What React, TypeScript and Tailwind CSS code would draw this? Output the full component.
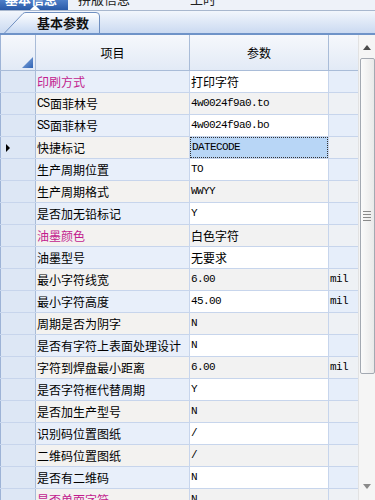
import React from "react";

type Row = { label: string; value: string; unit?: string; pink?: boolean; cjk?: boolean; selected?: boolean };

const rows: Row[] = [
  { label: "印刷方式", value: "打印字符", pink: true, cjk: true },
  { label: "CS面菲林号", value: "4w0024f9a0.to" },
  { label: "SS面菲林号", value: "4w0024f9a0.bo" },
  { label: "快捷标记", value: "DATECODE", selected: true },
  { label: "生产周期位置", value: "TO" },
  { label: "生产周期格式", value: "WWYY" },
  { label: "是否加无铅标记", value: "Y" },
  { label: "油墨颜色", value: "白色字符", pink: true, cjk: true },
  { label: "油墨型号", value: "无要求", cjk: true },
  { label: "最小字符线宽", value: "6.00", unit: "mil" },
  { label: "最小字符高度", value: "45.00", unit: "mil" },
  { label: "周期是否为阴字", value: "N" },
  { label: "是否有字符上表面处理设计", value: "N" },
  { label: "字符到焊盘最小距离", value: "6.00", unit: "mil" },
  { label: "是否字符框代替周期", value: "Y" },
  { label: "是否加生产型号", value: "N" },
  { label: "识别码位置图纸", value: "/" },
  { label: "二维码位置图纸", value: "/" },
  { label: "是否有二维码", value: "N" },
  { label: "是否单面字符", value: "N", pink: true },
];

function Label({ text }: { text: string }) {
  const m = text.match(/^([A-Z]+)(.*)$/);
  if (m) {
    return (
      <>
        <span className="font-['Liberation_Mono',monospace] text-[12px] tracking-[-1.2px] mr-[1px]">{m[1]}</span>
        {m[2]}
      </>
    );
  }
  return <>{text}</>;
}

export default function App() {
  return (
    <div className="w-[375px] h-[500px] overflow-hidden bg-white font-['Noto_Sans_CJK_SC',sans-serif] text-[12px] text-black leading-none">
      {/* top cut-off tab strip */}
      <div className="h-[11px] overflow-hidden flex bg-[#eef2f9] border-b border-[#a8b7ce]">
        <div className="relative w-[68px] h-[10px] bg-gradient-to-b from-[#4f7fc8] to-[#2a5aa8]">
          <div className="-mt-[9px] pl-[5px] text-[13px] font-bold text-white leading-[16px]">基本信息</div>
          <div className="absolute bottom-0 left-[30px] w-0 h-0 border-l-[5px] border-r-[5px] border-b-[5px] border-l-transparent border-r-transparent border-b-white" />
        </div>
        <div className="-mt-[9px] ml-[10px] text-[13px] text-[#222] leading-[16px]">拼版信息</div>
        <div className="-mt-[9px] ml-[60px] text-[13px] text-[#222] leading-[16px]">工时</div>
      </div>

      {/* sub tab area */}
      <div className="h-[22px] bg-gradient-to-b from-[#f2f6fc] to-[#cbdaf1] flex items-end">
        <div className="relative w-[100px] h-[21px]">
          <svg className="absolute inset-0" width="100" height="21" viewBox="0 0 100 21">
            <defs>
              <linearGradient id="tg" x1="0" y1="0" x2="0" y2="1">
                <stop offset="0" stopColor="#ffffff" />
                <stop offset="1" stopColor="#c6d8f2" />
              </linearGradient>
            </defs>
            <path d="M4.5 21 L23 1.5 Q24 0.5 26 0.5 L96 0.5 Q99.5 0.5 99.5 4 L99.5 21" fill="url(#tg)" stroke="#6f8fc0" strokeWidth="1" />
          </svg>
          <div className="relative pl-[37px] pt-[4px] text-[13px] font-bold text-[#111] leading-[14px]">基本参数</div>
        </div>
      </div>
      <div className="h-[2px] bg-[#6f93c8]" />

      {/* grid */}
      <div className="flex">
        <div className="w-[358px] flex flex-col">
          {/* header */}
          <div className="flex h-[36px] border-b border-[#a9bcd8] bg-gradient-to-b from-[#f6f8fc] to-[#e2eaf6]">
            <div className="relative w-[36px] border-r border-[#a9bcd8] border-l border-l-[#9db3d6]">
              <svg className="absolute right-[2px] bottom-[2px]" width="11" height="11" viewBox="0 0 11 11">
                <defs>
                  <linearGradient id="hg" x1="0" y1="0" x2="1" y2="1">
                    <stop offset="0" stopColor="#8fb0e0" />
                    <stop offset="1" stopColor="#2f63b5" />
                  </linearGradient>
                </defs>
                <path d="M11 0 L11 11 L0 11 Z" fill="url(#hg)" />
              </svg>
            </div>
            <div className="w-[154px] border-r border-[#a9bcd8] flex items-center justify-center">项目</div>
            <div className="w-[139px] border-r border-[#a9bcd8] flex items-center justify-center">参数</div>
            <div className="w-[29px]" />
          </div>
          {rows.map((r, i) => {
            const odd = i % 2 === 0;
            return (
              <div key={i} className="flex h-[22px] border-b border-[#c7d5ec]">
                <div className="relative w-[36px] border-r border-[#a9bcd8] border-l border-l-[#9db3d6] bg-[#dde7f5] flex items-center">
                  {r.selected && (
                    <div className="ml-[5px] w-0 h-0 border-t-[4px] border-b-[4px] border-l-[4px] border-t-transparent border-b-transparent border-l-black" />
                  )}
                </div>
                <div
                  className={
                    "w-[154px] border-r border-[#c7d5ec] flex items-center pl-[1px] whitespace-nowrap overflow-hidden " +
                    (odd ? "bg-[#e8effa] " : "bg-[#f3f2f0] ") +
                    (r.pink ? "text-[#c21c8e]" : "text-black")
                  }
                >
                  <Label text={r.label} />
                </div>
                <div
                  className={
                    "w-[139px] border-r border-[#c7d5ec] flex items-center " +
                    (r.selected ? "bg-[#b8d6f6] " : odd ? "bg-white " : "bg-[#f2f2f2] ")
                  }
                >
                  <div
                    className={
                      "w-full h-full flex items-center pl-[1px] " +
                      (r.selected ? "border border-dotted border-[#333] " : "") +
                      (r.cjk ? "text-[12px]" : "font-['Liberation_Mono','Noto_Sans_CJK_SC',monospace] text-[11px] tracking-[-0.6px]")
                    }
                  >
                    {r.value}
                  </div>
                </div>
                <div
                  className={
                    "w-[29px] flex items-center pl-[1px] font-['Liberation_Mono',monospace] text-[11px] tracking-[-0.6px] " +
                    (odd ? "bg-[#e6eefa]" : "bg-[#eef1f5]")
                  }
                >
                  {r.unit ?? ""}
                </div>
              </div>
            );
          })}
        </div>

        {/* scrollbar */}
        <div className="w-[17px] h-[465px] bg-[#f5f5f5] border-l border-[#e2e2e2] flex flex-col items-center">
          <div className="h-[22px] w-full flex items-center justify-center pt-[2px]">
            <div className="w-0 h-0 border-l-[4px] border-r-[4px] border-b-[5px] border-l-transparent border-r-transparent border-b-[#4a4a4a]" />
          </div>
          <div className="mt-[1px] w-[15px] h-[316px] rounded-[2px] border border-[#a3a9b2] bg-gradient-to-r from-[#fbfbfb] to-[#e9e9e9] flex items-center justify-center">
            <div className="flex flex-col gap-[2px]">
              <div className="w-[8px] h-[1px] bg-[#8a8a8a]" />
              <div className="w-[8px] h-[1px] bg-[#8a8a8a]" />
              <div className="w-[8px] h-[1px] bg-[#8a8a8a]" />
              <div className="w-[8px] h-[1px] bg-[#8a8a8a]" />
            </div>
          </div>
          <div className="flex-1" />
          <div className="h-[22px] w-full flex items-center justify-center pb-[6px]">
            <div className="w-0 h-0 border-l-[4px] border-r-[4px] border-t-[5px] border-l-transparent border-r-transparent border-t-[#8a8a8a]" />
          </div>
        </div>
      </div>
    </div>
  );
}
